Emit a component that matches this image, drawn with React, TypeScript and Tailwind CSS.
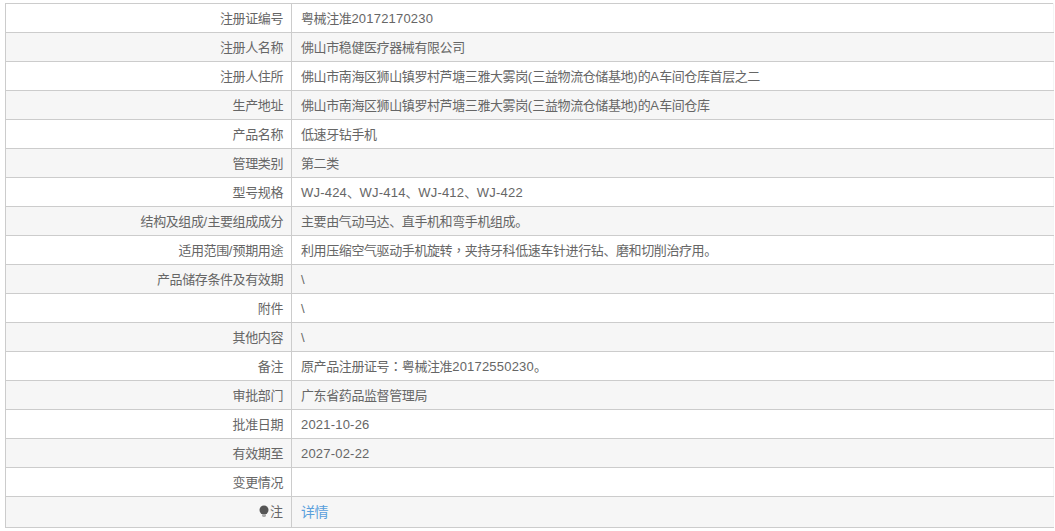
import React from 'react';

const rows: [string, string][] = [
  ['注册证编号', '粤械注准20172170230'],
  ['注册人名称', '佛山市稳健医疗器械有限公司'],
  ['注册人住所', '佛山市南海区狮山镇罗村芦塘三雅大雾岗(三益物流仓储基地)的A车间仓库首层之二'],
  ['生产地址', '佛山市南海区狮山镇罗村芦塘三雅大雾岗(三益物流仓储基地)的A车间仓库'],
  ['产品名称', '低速牙钻手机'],
  ['管理类别', '第二类'],
  ['型号规格', 'WJ-424、WJ-414、WJ-412、WJ-422'],
  ['结构及组成/主要组成成分', '主要由气动马达、直手机和弯手机组成。'],
  ['适用范围/预期用途', '利用压缩空气驱动手机旋转，夹持牙科低速车针进行钻、磨和切削治疗用。'],
  ['产品储存条件及有效期', '\\'],
  ['附件', '\\'],
  ['其他内容', '\\'],
  ['备注', '原产品注册证号：粤械注准20172550230。'],
  ['审批部门', '广东省药品监督管理局'],
  ['批准日期', '2021-10-26'],
  ['有效期至', '2027-02-22'],
  ['变更情况', ''],
];

// latin runs sit a little wider and CJK runs a little tighter than the default
const Mixed = ({ text }: { text: string }) => (
  <>
    {text.match(/[\x00-\x7f]+|[，：]|[^\x00-\x7f，：]+/g)?.map((run, i) => {
      if (/^[\x00-\x7f]/.test(run)) {
        return <span key={i} className="tracking-[0.2px]">{run}</span>;
      }
      if (run === '，' || run === '：') {
        return <span key={i} className="tracking-[-0.4px] font-['Noto_Sans_CJK_TC',sans-serif]">{run}</span>;
      }
      return <span key={i} className="tracking-[-0.4px]">{run}</span>;
    })}
  </>
);

const App = () => {
  return (
    <div className="h-[531px] overflow-hidden bg-white pt-[3px] pl-[5px] text-[13px] text-[#666] font-['Arial','Liberation_Sans','Noto_Sans_CJK_SC',sans-serif]">
      <table className="w-[1049px] table-fixed border-collapse">
        <colgroup>
          <col className="w-[286px]" />
          <col />
        </colgroup>
        <tbody>
          {rows.map(([label, value], index) => (
            <tr key={label} className={index % 2 === 1 ? 'h-[29px] bg-[#f6f6f6]' : 'h-[29px]'}>
              <td className="border border-[#ccc] border-r-[#ccc] pt-px pr-2 text-right"><Mixed text={label} /></td>
              <td className="border border-[#ccc] border-r-[#f4f4f4] pt-px pl-[9px]"><Mixed text={value} /></td>
            </tr>
          ))}
          <tr className="h-[31px] bg-[#f6f6f6]">
            <td className="border border-[#ccc] pt-px pr-2 text-right">
              <span className="inline-flex items-center">
                <svg width="11" height="13" viewBox="0 0 11 13">
                  <circle cx="5" cy="5" r="4.5" fill="#555" />
                  <path d="M3 9.5h4v1.5l-1 1h-2l-1-1z" fill="#aaa" />
                </svg>
                注
              </span>
            </td>
            <td className="border border-[#ccc] border-r-[#f4f4f4] pt-px pl-[9px] text-[14px] tracking-[-0.5px] text-[#5a9fdc]">详情</td>
          </tr>
        </tbody>
      </table>
    </div>
  );
};

export default App;
